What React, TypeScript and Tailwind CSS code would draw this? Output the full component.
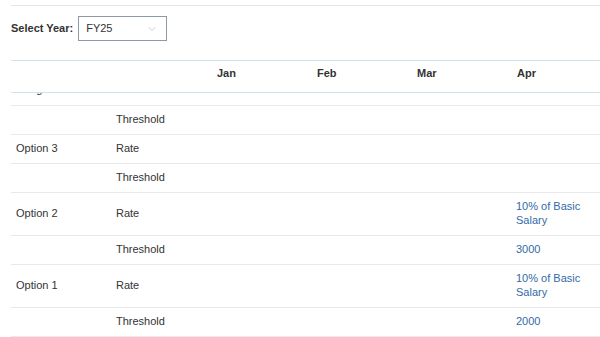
import { ChevronDown } from 'lucide-react'

type Row = { option?: string; kind: string; apr?: string }

const rows: Row[] = [
  { kind: 'Threshold' },
  { option: 'Option 3', kind: 'Rate' },
  { kind: 'Threshold' },
  { option: 'Option 2', kind: 'Rate', apr: '10% of Basic Salary' },
  { kind: 'Threshold', apr: '3000' },
  { option: 'Option 1', kind: 'Rate', apr: '10% of Basic Salary' },
  { kind: 'Threshold', apr: '2000' },
]

const months = ['Jan', 'Feb', 'Mar', 'Apr']
const grid = 'grid grid-cols-[100px_100px_100px_100px_100px_1fr]'

function Cell({ children, blue }: { children?: React.ReactNode; blue?: boolean }) {
  return (
    <div
      className={`flex items-center border-b border-[#e7eaed] px-[5px] pt-[6px] pb-[8px] leading-[14px] ${
        blue ? 'text-[#336aa8]' : 'text-[#333]'
      }`}
    >
      <span className="w-[70px]">{children}</span>
    </div>
  )
}

export default function App() {
  return (
    <div className="h-[337px] w-[600px] overflow-hidden bg-white pl-[11px] pt-[5px] font-['Liberation_Sans',sans-serif] text-[11px] text-[#333]">
      <div className="border-t border-[#dfe6ec]" />

      <div className="mt-[10px] flex items-center gap-[5px]">
        <span className="font-bold">Select Year:</span>
        <div className="flex h-[25px] w-[89px] items-center justify-between border border-[#8d9aa5] pl-[7px] pr-[8px]">
          <span>FY25</span>
          <ChevronDown className="h-[12px] w-[12px] text-[#a9b2ba]" strokeWidth={1.25} />
        </div>
      </div>

      <div className="mt-[19px]">
        <div className={`${grid} h-[33px] border-y border-[#d6e2ea] font-bold`}>
          <div />
          <div />
          {months.map((m) => (
            <div key={m} className="flex items-center px-[6px]">
              {m}
            </div>
          ))}
          <div />
        </div>

        {/* row scrolled mostly out of view under the header */}
        <div className="h-[13px] overflow-hidden border-b border-[#e7eaed]">
          <div className={`${grid} -mt-[18px]`}>
            <div className="px-[5px] py-[7px] leading-[14px]">Range</div>
          </div>
        </div>

        {rows.map((r, i) => (
          <div key={i} className={grid}>
            <Cell>{r.option}</Cell>
            <Cell>{r.kind}</Cell>
            <Cell />
            <Cell />
            <Cell />
            <Cell blue>{r.apr}</Cell>
          </div>
        ))}
      </div>
    </div>
  )
}
